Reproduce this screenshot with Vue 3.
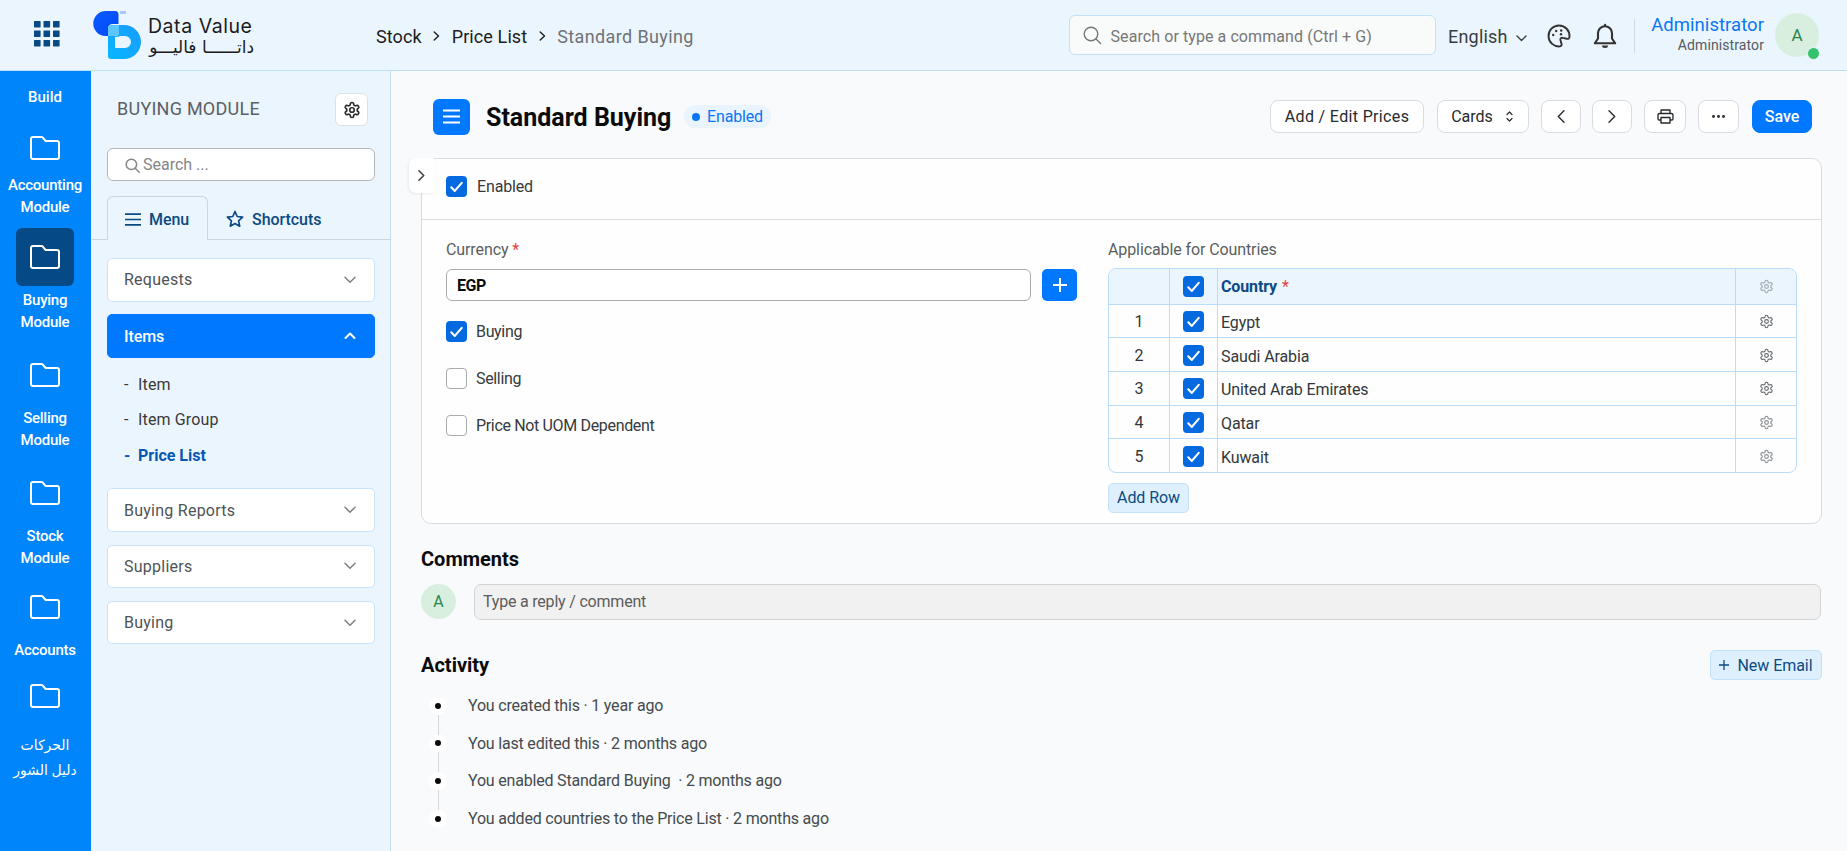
<template>
  <div class="desk">
    <header class="navbar">
      <svg class="apps-icon" width="26" height="26" viewBox="0 0 26 26" fill="#084a86">
        <template v-for="r in 3" :key="r">
          <rect
            v-for="c in 3"
            :key="c"
            :x="(c - 1) * 9.5"
            :y="(r - 1) * 9.5"
            width="6.6"
            height="6.4"
            rx="0.6"
          />
        </template>
      </svg>
      <div class="logo">
        <svg width="49" height="50" viewBox="0 0 49 50">
          <defs>
            <linearGradient id="logoDark" x1="0" y1="0" x2="1" y2="1">
              <stop offset="0" stop-color="#0d5bff" />
              <stop offset="1" stop-color="#0047f5" />
            </linearGradient>
            <linearGradient id="logoLight" x1="1" y1="0" x2="0" y2="1">
              <stop offset="0" stop-color="#1a9bff" />
              <stop offset="1" stop-color="#08b6ff" />
            </linearGradient>
          </defs>
          <path
            d="M13 1H22Q25.500 1 25.500 4.500V14H20Q15 14 15 19V26H12.500A12.500 12.500 0 0 1 13 1Z"
            fill="url(#logoDark)"
          />
          <rect x="27" y="1" width="6" height="3" fill="#a9c8ff" />
          <path
            fill-rule="evenodd"
            d="M18 15H31A17 17 0 0 1 31 49H18Q15 49 15 46V26H22Q26 26 26 22V15ZM22 27V38H32A5.500 5.500 0 0 0 32 26H27Q26 27 22 27Z"
            fill="url(#logoLight)"
          />
          <path d="M18 15H26V22Q26 26 22 26H15V18Q15 15 18 15Z" fill="#5bc6ff" />
        </svg>
        <div class="logo-text">
          <span class="logo-en">Data Value</span>
          <span class="logo-ar" dir="rtl" lang="ar">داتــــــا فاليـــو</span>
        </div>
      </div>
      <nav class="breadcrumb">
        <span>Stock</span>
        <svg width="7" height="10" viewBox="0 0 7 10"><path d="M1.200 1 5.500 5 1.200 9" /></svg>
        <span>Price List</span>
        <svg width="7" height="10" viewBox="0 0 7 10"><path d="M1.200 1 5.500 5 1.200 9" /></svg>
        <span class="current">Standard Buying</span>
      </nav>
      <div class="command-bar">
        <svg width="19" height="19" viewBox="0 0 19 19">
          <circle cx="8" cy="8" r="6.800" />
          <path d="m13 13 4.600 4.600" />
        </svg>
        <span>Search or type a command (Ctrl + G)</span>
      </div>
      <div class="language">
        <span>English</span>
        <svg width="11" height="7" viewBox="0 0 11 7"><path d="m1 1 4.500 4.500L10 1" /></svg>
      </div>
      <svg class="palette" width="24" height="24" viewBox="0 0 24 24">
        <path
          d="M22.500 12.500A10.500 10.500 0 1 0 13 22.400c1.500-.2 1.900-1.500 1.400-3l-1-3.400c-.4-1.500.9-2.500 2.400-2.100l4 .9c1.500.3 2.700-.6 2.700-2.300Z"
        />
        <g class="dots">
          <circle cx="6.200" cy="11" r="1.200" />
          <circle cx="9.200" cy="7" r="1.200" />
          <circle cx="14.200" cy="6.500" r="1.200" />
          <circle cx="14" cy="10.300" r="1.200" />
        </g>
      </svg>
      <svg class="bell" width="24" height="26" viewBox="0 0 24 26">
        <path d="M12 3.200a7 7 0 0 0-7 7v5.300L1.800 20.300h20.400L19 15.500v-5.300a7 7 0 0 0-7-7Z" />
        <path d="M12 3V1.800" />
        <path class="clapper" d="M9 22.500h6a3 2.500 0 0 1-6 0Z" />
      </svg>
      <div class="user">
        <div class="user-names">
          <span class="full-name">Administrator</span>
          <span class="role">Administrator</span>
        </div>
        <div class="avatar">A<i class="online"></i></div>
      </div>
    </header>

    <div class="body">
      <aside class="rail">
        <div class="rail-title">Build</div>
        <div v-for="m in modules" :key="m.lines[0]" class="module" :class="[m.cls, { active: m.active }]">
          <div class="module-icon">
            <svg width="32" height="26" viewBox="0 0 32 26">
              <path
                d="M4 2h8.500q.8 0 1.300.6l2.400 2.900q.4.500 1.200.500H28q2 0 2 2v14q0 2-2 2H4q-2 0-2-2V4q0-2 2-2Z"
              />
            </svg>
          </div>
          <span v-for="line in m.lines" :key="line" class="module-line">{{ line }}</span>
        </div>
      </aside>

      <aside class="panel">
        <div class="panel-head">
          <h2>BUYING MODULE</h2>
          <button class="gear-btn">
            <svg class="gear" width="18" height="18" viewBox="0 0 24 24">
              <path :d="gearPath" />
              <circle cx="12" cy="12" r="3" />
            </svg>
          </button>
        </div>
        <div class="panel-search">
          <svg width="15" height="15" viewBox="0 0 15 15">
            <circle cx="6.400" cy="6.400" r="5.200" />
            <path d="m10.200 10.200 4 4" />
          </svg>
          <span>Search ...</span>
        </div>
        <div class="tabs">
          <div class="tab active">
            <svg width="16" height="13" viewBox="0 0 16 13"><path d="M0 1.200h16M0 6.500h16M0 11.800h16" /></svg>
            <span>Menu</span>
          </div>
          <div class="tab">
            <svg width="18" height="18" viewBox="0 0 18 18">
              <path d="m9 1.500 2.200 5 5.400.6-4 3.700 1.100 5.400L9 13.500l-4.700 2.700 1.100-5.400-4-3.700 5.400-.6Z" />
            </svg>
            <span>Shortcuts</span>
          </div>
        </div>
        <div class="menu">
          <template v-for="group in menu" :key="group.label">
            <div class="menu-group" :class="{ open: group.items }">
              <span>{{ group.label }}</span>
              <svg width="12" height="8" viewBox="0 0 12 8">
                <path :d="group.items ? 'm1.500 6 4.500-4.500L10.500 6' : 'm1 1.200 5 5 5-5'" />
              </svg>
            </div>
            <ul v-if="group.items" class="submenu">
              <li v-for="item in group.items" :key="item" :class="{ current: item === 'Price List' }">
                <i>-</i>{{ item }}
              </li>
            </ul>
          </template>
        </div>
      </aside>

      <main class="content">
        <div class="page-head">
          <div class="list-btn">
            <svg width="17" height="15" viewBox="0 0 17 15">
              <path d="M0 1.500h17M0 7.500h17M0 13.500h17" />
            </svg>
          </div>
          <h1>Standard Buying</h1>
          <div class="status"><i></i><span>Enabled</span></div>
          <div class="actions">
            <button class="btn prices">Add / Edit Prices</button>
            <button class="btn cards">
              Cards
              <svg width="7" height="11" viewBox="0 0 7 11"><path d="m1 3.500 2.500-2.500L6 3.500M1 7.500 3.500 10 6 7.500" /></svg>
            </button>
            <button class="btn prev">
              <svg width="8" height="13" viewBox="0 0 8 13"><path d="M7 .8 1.300 6.500 7 12.200" /></svg>
            </button>
            <button class="btn next">
              <svg width="8" height="13" viewBox="0 0 8 13"><path d="m1 .8 5.700 5.700L1 12.200" /></svg>
            </button>
            <button class="btn print">
              <svg width="17" height="15" viewBox="0 0 17 15">
                <path d="M4 4.500V1h9v3.500M4 11H2.200Q1 11 1 9.800V6Q1 4.500 2.500 4.500h12Q16 4.500 16 6v3.800Q16 11 14.800 11H13M4 8.500h9V14H4Z" />
              </svg>
            </button>
            <button class="btn more"><i></i><i></i><i></i></button>
            <button class="btn save">Save</button>
          </div>
        </div>

        <section class="card">
          <div class="side-toggle">
            <svg width="7" height="11" viewBox="0 0 7 11"><path d="m1 .8 4.700 4.700L1 10.200" /></svg>
          </div>
          <div class="card-top">
            <label class="check">
              <span class="box on"><svg viewBox="0 0 20 20"><path :d="tickPath" /></svg></span>
              Enabled
            </label>
          </div>
          <div class="card-body">
            <div class="col-left">
              <div class="label">Currency <b>*</b></div>
              <div class="currency-row">
                <div class="input">EGP</div>
                <button class="plus-btn">
                  <svg width="14" height="14" viewBox="0 0 14 14"><path d="M7 0v14M0 7h14" /></svg>
                </button>
              </div>
              <div class="checks">
                <label v-for="o in options" :key="o.label" class="check">
                  <span class="box" :class="{ on: o.on }">
                    <svg v-if="o.on" viewBox="0 0 20 20"><path :d="tickPath" /></svg>
                  </span>
                  {{ o.label }}
                </label>
              </div>
            </div>
            <div class="col-right">
              <div class="label">Applicable for Countries</div>
              <div class="grid">
                <div class="grid-row grid-head">
                  <div class="cell"></div>
                  <div class="cell">
                    <span class="box on"><svg viewBox="0 0 20 20"><path :d="tickPath" /></svg></span>
                  </div>
                  <div class="cell name">Country <b>*</b></div>
                  <div class="cell">
                    <svg class="gear faint" width="15" height="15" viewBox="0 0 24 24">
                      <path :d="gearPath" />
                      <circle cx="12" cy="12" r="3" />
                    </svg>
                  </div>
                </div>
                <div v-for="(country, i) in countries" :key="country" class="grid-row">
                  <div class="cell">{{ i + 1 }}</div>
                  <div class="cell">
                    <span class="box on"><svg viewBox="0 0 20 20"><path :d="tickPath" /></svg></span>
                  </div>
                  <div class="cell name">{{ country }}</div>
                  <div class="cell">
                    <svg class="gear" :class="{ dim: i > 2 }" width="15" height="15" viewBox="0 0 24 24">
                      <path :d="gearPath" />
                      <circle cx="12" cy="12" r="3" />
                    </svg>
                  </div>
                </div>
              </div>
              <button class="soft-btn add-row">Add Row</button>
            </div>
          </div>
        </section>

        <h3 class="comments-title">Comments</h3>
        <div class="comment-row">
          <div class="avatar small">A</div>
          <div class="comment-input">Type a reply / comment</div>
        </div>

        <div class="activity-head">
          <h3>Activity</h3>
          <button class="soft-btn new-email">
            <svg width="10" height="10" viewBox="0 0 10 10"><path d="M5 0v10M0 5h10" /></svg>
            New Email
          </button>
        </div>
        <ul class="timeline">
          <li v-for="entry in activity" :key="entry">
            <i class="dot"></i>
            <span>{{ entry }}</span>
          </li>
        </ul>
      </main>
    </div>
  </div>
</template>

<script setup>
const gearPath =
  "M12.22 2h-.44a2 2 0 0 0-2 2v.18a2 2 0 0 1-1 1.73l-.43.25a2 2 0 0 1-2 0l-.15-.08a2 2 0 0 0-2.73.73l-.22.38a2 2 0 0 0 .73 2.73l.15.1a2 2 0 0 1 1 1.72v.51a2 2 0 0 1-1 1.74l-.15.09a2 2 0 0 0-.73 2.73l.22.38a2 2 0 0 0 2.73.73l.15-.08a2 2 0 0 1 2 0l.43.25a2 2 0 0 1 1 1.73V20a2 2 0 0 0 2 2h.44a2 2 0 0 0 2-2v-.18a2 2 0 0 1 1-1.73l.43-.25a2 2 0 0 1 2 0l.15.08a2 2 0 0 0 2.73-.73l.22-.39a2 2 0 0 0-.73-2.73l-.15-.08a2 2 0 0 1-1-1.74v-.5a2 2 0 0 1 1-1.74l.15-.09a2 2 0 0 0 .73-2.73l-.22-.38a2 2 0 0 0-2.73-.73l-.15.08a2 2 0 0 1-2 0l-.43-.25a2 2 0 0 1-1-1.73V4a2 2 0 0 0-2-2z";
const tickPath = "m5 10.800 3.400 3.400L15 6.500";

const modules = [
  { lines: ["Accounting", "Module"], cls: "tight" },
  { lines: ["Buying", "Module"], active: true },
  { lines: ["Selling", "Module"] },
  { lines: ["Stock", "Module"] },
  { lines: ["Accounts"] },
  { lines: ["الحركات", "دليل الشور"], cls: "arabic" },
];

const menu = [
  { label: "Requests" },
  { label: "Items", items: ["Item", "Item Group", "Price List"] },
  { label: "Buying Reports" },
  { label: "Suppliers" },
  { label: "Buying" },
];

const options = [
  { label: "Buying", on: true },
  { label: "Selling", on: false },
  { label: "Price Not UOM Dependent", on: false },
];

const countries = ["Egypt", "Saudi Arabia", "United Arab Emirates", "Qatar", "Kuwait"];

const activity = [
  "You created this · 1 year ago",
  "You last edited this · 2 months ago",
  "You enabled Standard Buying  · 2 months ago",
  "You added countries to the Price List · 2 months ago",
];
</script>

<style>
body {
  margin: 0;
  overflow: hidden;
}
</style>

<style scoped>
.desk {
  height: 851px;
  display: flex;
  flex-direction: column;
  box-sizing: border-box;
  background: #f8fafb;
  color: #333;
  font-family: Roboto, "DejaVu Sans", sans-serif;
  font-size: 16px;
  white-space: nowrap;
}

.desk *,
.desk *::before {
  box-sizing: border-box;
}

svg {
  fill: none;
  stroke: currentColor;
  stroke-linecap: round;
  stroke-linejoin: round;
  flex: none;
}

h1,
h2,
h3,
ul {
  margin: 0;
  padding: 0;
  list-style: none;
}

button {
  font: inherit;
  letter-spacing: inherit;
  padding: 0;
}

i {
  font-style: normal;
}

/* ---------- navbar ---------- */
.navbar {
  height: 71px;
  flex: none;
  display: flex;
  align-items: center;
  padding-left: 34px;
  border-bottom: 1px solid #bfdff8;
  background: #ebf5fe;
}

.apps-icon {
  fill: #084a86;
  stroke: none;
  margin-top: -3px;
}

.logo {
  width: 283px;
  display: flex;
  gap: 6px;
  margin-left: 33px;
}

.logo svg {
  stroke: none;
}

.logo-text {
  display: flex;
  flex-direction: column;
  width: 106px;
  color: #1b1b1b;
}

.logo-en {
  margin-top: 4px;
  font-family: Inter, sans-serif;
  font-size: 19.5px;
  line-height: 25px;
  letter-spacing: 0.55px;
}

.logo-ar {
  font-family: "DejaVu Sans", sans-serif;
  font-size: 17px;
  line-height: 16px;
}

.breadcrumb {
  width: 693px;
  display: flex;
  align-items: center;
  gap: 11.5px;
  padding-top: 2px;
  color: #1c1c1c;
  font-size: 18px;
  letter-spacing: 0.1px;
}

.breadcrumb svg {
  stroke-width: 1.4;
}

.breadcrumb .current {
  color: #6f7376;
  letter-spacing: 0.38px;
}

.command-bar {
  width: 367px;
  height: 40px;
  display: flex;
  align-items: center;
  padding-left: 13px;
  gap: 8.5px;
  border: 1px solid #c3e1f8;
  border-radius: 6px;
  background: #f9fafa;
  color: #777;
  font-size: 16px;
  letter-spacing: 0.08px;
}

.command-bar svg {
  stroke-width: 1.4;
}

.command-bar span {
  margin-top: 3px;
}

.language {
  width: 99px;
  display: flex;
  align-items: center;
  gap: 8px;
  margin-left: 12px;
  padding-top: 2px;
  color: #383d42;
  font-size: 18px;
  letter-spacing: 0.2px;
}

.language svg {
  margin-top: 4px;
  stroke-width: 1.4;
}

.palette {
  margin-top: 1px;
  color: #333;
  stroke-width: 1.9;
}

.palette .dots {
  fill: #333;
  stroke: none;
}

.bell {
  margin-top: 1px;
  margin-left: 22px;
  color: #333;
  stroke-width: 2.1;
}

.bell .clapper {
  fill: #333;
  stroke: none;
}

.user {
  height: 34px;
  width: 185px;
  display: flex;
  align-items: center;
  justify-content: flex-end;
  margin-left: 17px;
  margin-top: 2px;
  gap: 11px;
  border-left: 1px solid #d3dbe2;
}

.user-names {
  display: flex;
  flex-direction: column;
  align-items: flex-end;
  margin-top: -4px;
}

.full-name {
  color: #0a76f5;
  font-size: 18.5px;
  line-height: 22px;
  letter-spacing: 0.05px;
}

.role {
  color: #555b60;
  font-size: 14px;
  line-height: 18px;
  letter-spacing: 0.1px;
}

.avatar {
  position: relative;
  width: 44px;
  height: 44px;
  flex: none;
  display: flex;
  align-items: center;
  justify-content: center;
  border-radius: 50%;
  background: #d8efe0;
  color: #27864a;
  font-size: 17px;
}

.user .avatar {
  margin-top: -2px;
}

.online {
  position: absolute;
  right: -1px;
  bottom: -3px;
  width: 13px;
  height: 13px;
  border: 1px solid #ebf5fe;
  border-radius: 50%;
  background: #36c26d;
}

/* ---------- module rail ---------- */
.body {
  flex: 1;
  display: flex;
  min-height: 0;
}

.rail {
  width: 91px;
  flex: none;
  display: grid;
  grid-template-rows: 48px 109px 118px 118px 114px 89px auto;
  align-content: start;
  padding-right: 1px;
  background: #0085fb;
  color: #fff;
  font-size: 15px;
  font-weight: 500;
  letter-spacing: -0.25px;
  text-align: center;
}

.rail-title {
  line-height: 52px;
  letter-spacing: 0;
}

.module {
  display: flex;
  flex-direction: column;
  align-items: center;
}

.module-icon {
  width: 58px;
  height: 58px;
  display: flex;
  align-items: center;
  justify-content: center;
  margin-bottom: 4px;
  border-radius: 6px;
}

.module-icon svg {
  stroke-width: 2;
}

.module.active .module-icon {
  background: #054a86;
}

.module-line {
  line-height: 21.5px;
}

.tight .module-icon {
  margin-bottom: -2px;
}

.arabic .module-icon {
  margin-bottom: 8px;
}

.arabic .module-line {
  font-size: 14px;
  line-height: 25px;
  letter-spacing: 0;
}

/* ---------- module panel ---------- */
.panel {
  width: 300px;
  flex: none;
  border-right: 1px solid #bfdff8;
  border-left: 1px solid #f4faff;
  background: #ebf5fe;
}

.panel-head {
  display: flex;
  align-items: center;
  justify-content: space-between;
  padding: 22px 22px 0 25px;
}

.panel-head h2 {
  margin-top: -2px;
  color: #5c6064;
  font-size: 18px;
  font-weight: 400;
  letter-spacing: 0.25px;
}

.gear-btn {
  width: 33px;
  height: 33px;
  display: flex;
  align-items: center;
  justify-content: center;
  border: 1px solid #dde1e5;
  border-radius: 6px;
  background: #fff;
}

.gear {
  color: #666b70;
  stroke-width: 1.8;
}

.gear-btn .gear {
  color: #2b2b2b;
  stroke-width: 2.2;
}

.gear.faint {
  color: #9fa9b1;
}

.gear.dim {
  color: #8b9094;
}

.panel-search {
  height: 33px;
  display: flex;
  align-items: center;
  gap: 3px;
  margin: 22px 15px 0 15px;
  padding-left: 17px;
  border: 1px solid #b5b8ba;
  border-radius: 6px;
  background: #fff;
  color: #858585;
}

.panel-search svg {
  margin-top: 1px;
  stroke-width: 1.5;
}

.tabs {
  height: 44px;
  display: flex;
  margin-top: 15px;
  padding-left: 15px;
  border-bottom: 1px solid #cbd5dc;
  color: #0b4a83;
  font-weight: 500;
  letter-spacing: -0.05px;
}

.tab {
  height: 44px;
  display: flex;
  align-items: center;
  gap: 8px;
  padding: 2px 0 0 18px;
}

.tab svg {
  stroke-width: 1.7;
}

.tab.active {
  width: 101px;
  padding-left: 17px;
  border: 1px solid #cbd5dc;
  border-bottom: none;
  border-radius: 6px 6px 0 0;
  background: #ebf5fe;
}

.menu {
  display: flex;
  flex-direction: column;
  gap: 12.8px;
  padding: 18px 15px;
}

.menu-group {
  height: 43.5px;
  flex: none;
  display: flex;
  align-items: center;
  justify-content: space-between;
  padding: 0 18px 0 16px;
  border: 1px solid #c9e4fa;
  border-radius: 5px;
  background: #fff;
  color: #4f5357;
  letter-spacing: 0.25px;
}

.menu-group svg {
  color: #7c8084;
  stroke-width: 1.5;
}

.menu-group.open {
  border-color: #0078ff;
  background: #0078ff;
  color: #fff;
  font-weight: 500;
  letter-spacing: -0.1px;
}

.menu-group.open svg {
  color: #fff;
  stroke-width: 2.1;
}

.submenu {
  height: 106px;
  padding: 2px 17px 0;
  color: #3a3a3a;
  line-height: 35.700px;
  letter-spacing: 0.15px;
  margin-top: -6px;
  margin-bottom: 5px;
}

.submenu i {
  display: inline-block;
  width: 14px;
}

.submenu .current {
  color: #0657b5;
  font-weight: 700;
  letter-spacing: 0;
}

/* ---------- page head ---------- */
.content {
  flex: 1;
  padding: 27px 25px 0 30px;
}

.page-head {
  display: flex;
  align-items: center;
  height: 37px;
  padding: 0 10px 0 12px;
}

.list-btn {
  width: 37px;
  height: 36px;
  display: flex;
  align-items: center;
  justify-content: center;
  border-radius: 6px;
  background: #0078ff;
  color: #fff;
}

.list-btn svg {
  stroke-width: 2;
  stroke-linecap: butt;
}

h1 {
  width: 198px;
  margin-left: 16px;
  padding-top: 1px;
  color: #0b0b0b;
  font-size: 25px;
  font-weight: 700;
}

.status {
  height: 23px;
  display: flex;
  align-items: center;
  gap: 7px;
  padding: 0 8px 0 8px;
  border-radius: 12px;
  background: #e9f4fe;
  color: #0a76f5;
  letter-spacing: -0.15px;
}

.status i {
  width: 8px;
  height: 8px;
  border-radius: 50%;
  background: #0a76f5;
}

.actions {
  display: flex;
  margin-left: auto;
}

.btn {
  height: 33px;
  display: flex;
  align-items: center;
  justify-content: center;
  border: 1px solid #d9dce0;
  border-radius: 8px;
  background: #fff;
  color: #25292c;
  font-size: 16px;
  stroke-width: 1.35;
}

.prices {
  width: 154px;
  margin-right: 13px;
  letter-spacing: 0.35px;
}

.cards {
  width: 92px;
  gap: 13px;
  padding-right: 2px;
  margin-right: 12px;
}

.cards svg {
  stroke-width: 1.2;
}

.prev {
  width: 40px;
  margin-right: 11px;
}

.next {
  width: 40px;
  margin-right: 12px;
}

.print {
  width: 42px;
  margin-right: 12px;
}

.more {
  width: 41px;
  gap: 2.500px;
  margin-right: 13px;
}

.more i {
  width: 2.8px;
  height: 2.8px;
  border-radius: 50%;
  background: #333;
}

.save {
  width: 60px;
  border-color: #0078ff;
  background: #0078ff;
  color: #fff;
  font-weight: 500;
}

/* ---------- form card ---------- */
.card {
  position: relative;
  height: 366px;
  margin-top: 23px;
  border: 1px solid #d9dcde;
  border-radius: 10px;
  background: #fefefe;
}

.side-toggle {
  position: absolute;
  left: -13px;
  top: -1px;
  width: 25px;
  height: 35px;
  display: flex;
  align-items: center;
  padding-left: 9px;
  border-radius: 7px 0 0 7px;
  background: #fff;
  box-shadow: -1px 1px 3px rgba(0, 0, 0, 0.07);
  color: #444;
  stroke-width: 1.6;
}

.card-top {
  height: 61px;
  display: flex;
  align-items: center;
  padding: 0 0 5px 24px;
  border-bottom: 1px solid #d9dcde;
}

.check {
  display: flex;
  align-items: center;
  gap: 10px;
  color: #363a3d;
  letter-spacing: -0.15px;
}

.checks .check {
  gap: 9px;
  letter-spacing: -0.34px;
}

.box {
  width: 21px;
  height: 21px;
  flex: none;
  display: flex;
  border: 1px solid #a9acae;
  border-radius: 4px;
  background: #fff;
}

.box.on {
  border: none;
  background: #056ae0;
  color: #fff;
}

.box svg {
  width: 100%;
  height: 100%;
  stroke-width: 2;
}

.card-body {
  display: flex;
  padding: 19px 24px 0;
}

.col-left {
  width: 631px;
}

.col-right {
  width: 689px;
  margin-left: 31px;
}

.label {
  height: 30px;
  color: #5a5e61;
  line-height: 21px;
  letter-spacing: -0.1px;
}

.label b,
.name b {
  color: #e8413d;
  font-weight: 400;
}

.currency-row {
  display: flex;
  justify-content: space-between;
}

.input {
  width: 585px;
  height: 32px;
  padding-left: 10px;
  border: 1px solid #a9acae;
  border-radius: 6px;
  background: #fff;
  color: #0b0b0b;
  font-weight: 700;
  line-height: 31px;
  letter-spacing: -0.4px;
}

.plus-btn {
  width: 35px;
  height: 32px;
  display: flex;
  align-items: center;
  justify-content: center;
  border: none;
  border-radius: 5px;
  background: #0078ff;
  color: #fff;
}

.plus-btn svg {
  stroke-width: 2;
}

.checks {
  display: flex;
  flex-direction: column;
  gap: 26px;
  margin-top: 20px;
}

.grid {
  margin-top: -1px;
  border: 1px solid #b9dcfa;
  border-radius: 8px;
  overflow: hidden;
}

.grid-row {
  height: 33.700px;
  display: grid;
  grid-template-columns: 60px 48px 518px 1fr;
  border-top: 1px solid #b9dcfa;
  color: #33373a;
}

.grid-head {
  height: 34.5px;
  border-top: none;
  background: #ebf5fe;
}

.cell {
  display: flex;
  align-items: center;
  justify-content: center;
  padding-top: 1px;
  border-left: 1px solid #b9dcfa;
}

.cell:first-child {
  border-left: none;
}

.cell.name {
  justify-content: flex-start;
  padding: 3px 0 0 3px;
  letter-spacing: -0.12px;
}

.grid-head .name {
  gap: 5px;
  padding-top: 1px;
  color: #0b4a83;
  font-weight: 700;
}

.soft-btn {
  height: 30px;
  display: flex;
  align-items: center;
  justify-content: center;
  gap: 8px;
  border: 1px solid #c3e1f8;
  border-radius: 5px;
  background: #def0fe;
  color: #0b4a83;
}

.add-row {
  width: 81px;
  margin-top: 10px;
  letter-spacing: -0.1px;
}

/* ---------- comments and activity ---------- */
h3 {
  color: #0b0b0b;
  font-size: 20px;
  font-weight: 700;
  line-height: 24px;
}

.comments-title {
  margin-top: 23px;
}

.comment-row {
  display: flex;
  align-items: center;
  gap: 18px;
  margin-top: 13px;
}

.avatar.small {
  width: 35px;
  height: 35px;
  margin-top: -2px;
  font-size: 16px;
}

.comment-input {
  flex: 1;
  height: 36px;
  margin-right: 1px;
  padding-left: 8px;
  border: 1px solid #d3d3d3;
  border-radius: 7px;
  background: #f1f1f1;
  color: #5c5c5c;
  line-height: 34px;
  letter-spacing: -0.2px;
}

.activity-head {
  display: flex;
  align-items: center;
  justify-content: space-between;
  margin-top: 30px;
}

.new-email {
  width: 112px;
  letter-spacing: -0.05px;
}

.new-email svg {
  stroke-width: 1.3;
}

.timeline {
  margin-top: 7px;
  padding-left: 8px;
}

.timeline li {
  position: relative;
  height: 37.600px;
  display: flex;
  align-items: center;
  gap: 21px;
  color: #454a4e;
  letter-spacing: -0.19px;
  white-space: pre;
}

.timeline .dot {
  width: 18px;
  height: 18px;
  display: flex;
  border: 6.500px solid #fff;
  border-radius: 50%;
  background: #0b0b0b;
}

.timeline li + li::before {
  content: "";
  position: absolute;
  left: 8.500px;
  top: -10px;
  width: 1px;
  height: 20px;
  background: #d5d8da;
}
</style>
